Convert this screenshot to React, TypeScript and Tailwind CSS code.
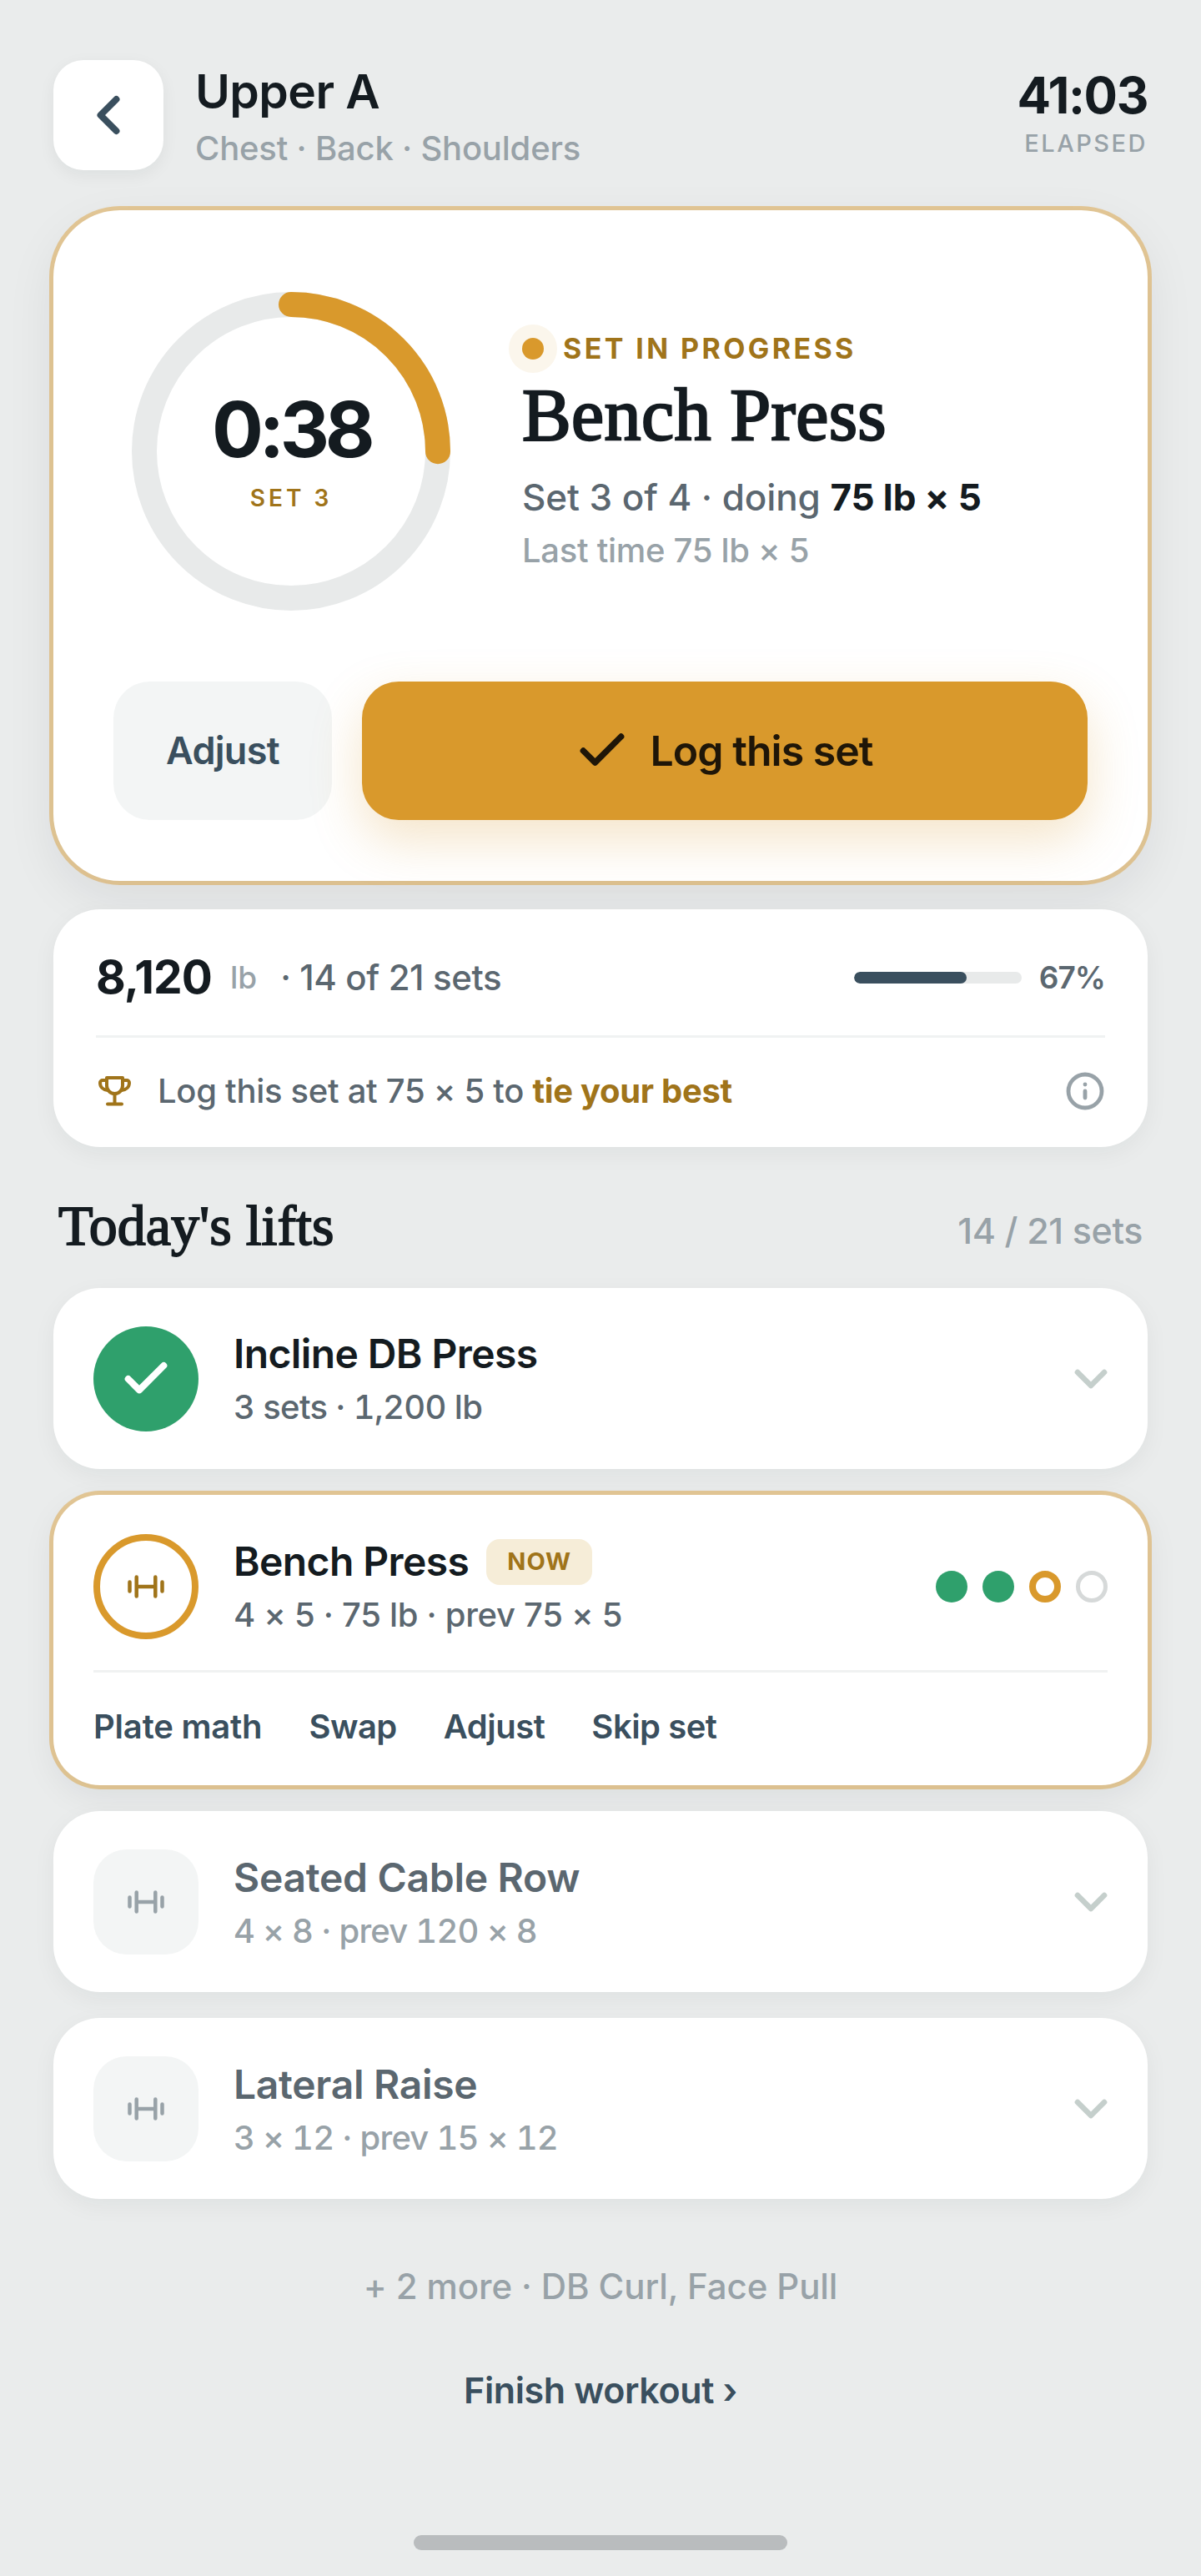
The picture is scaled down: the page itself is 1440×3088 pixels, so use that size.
import { Check, ChevronDown, ChevronLeft, Info } from "lucide-react";

const serif = "font-['Liberation_Serif',serif]";

function Barbell({ className }: { className: string }) {
  return (
    <svg viewBox="0 0 44 28" fill="none" stroke="currentColor" strokeWidth="4.5" strokeLinecap="round" className={className}>
      <path d="M2.5 8.5v11M10.7 2.5v23M33.3 2.5v23M41.5 8.5v11M10.7 14h22.6" />
    </svg>
  );
}

function TrophyIcon({ className }: { className: string }) {
  return (
    <svg viewBox="0 0 39 36" fill="none" stroke="currentColor" strokeWidth="4" strokeLinecap="round" strokeLinejoin="round" className={className}>
      <path d="M10 2h19v9.5a9.5 9.5 0 0 1-19 0z" />
      <path d="M10 5H5a3 3 0 0 0-3 3c0 5 3.5 8.5 9 9M29 5h5a3 3 0 0 1 3 3c0 5-3.5 8.5-9 9" />
      <path d="M19.5 21v12M11 33.5h17" />
    </svg>
  );
}

function LiftRow({ name, meta }: { name: string; meta: string }) {
  return (
    <div className="h-[217px] rounded-[56px] bg-white shadow-[0_8px_28px_rgba(20,30,40,0.05)] px-[48px] flex items-center">
      <div className="w-[126px] h-[126px] rounded-[40px] bg-[#f3f5f5] flex items-center justify-center text-[#98a2a8]">
        <Barbell className="w-[44px] h-[28px]" />
      </div>
      <div className="ml-[42px] flex-1 pt-[2px]">
        <div className="text-[48px] leading-[60px] font-semibold text-[#5b6770] tracking-[-0.3px]">{name}</div>
        <div className="text-[40px] leading-[52px] mt-[8px] font-medium tabular-nums text-[#98a2a8] tracking-[-0.8px]">{meta}</div>
      </div>
      <ChevronDown className="w-[64px] h-[64px] -mr-[12px] text-[#c5cfcc]" strokeWidth={2.5} />
    </div>
  );
}

export default function App() {
  return (
    <div className="h-[3088px] bg-[#eaecec] px-[64px] pt-[72px] font-['Inter',sans-serif] text-[#141b20] relative overflow-hidden">
      <header className="h-[132px] flex items-start">
        <button type="button" className="w-[132px] h-[132px] rounded-[36px] bg-white shadow-[0_6px_20px_rgba(20,30,40,0.06)] flex items-center justify-center text-[#3a4f5e]">
          <ChevronLeft className="w-[76px] h-[76px]" strokeWidth={2.5} />
        </button>
        <div className="ml-[38px] flex-1">
          <div className="text-[57px] leading-[68px] font-semibold tracking-[-0.6px] mt-[4px]">Upper A</div>
          <div className="text-[40px] leading-[52px] mt-[8px] font-medium text-[#98a2a8] tracking-[-0.2px]">Chest · Back · Shoulders</div>
        </div>
        <div className="text-right pt-[10px]">
          <div className="text-[60px] leading-[64px] font-bold tracking-[-1.4px]">41:03</div>
          <div className="text-[29px] leading-[36px] mt-[8px] font-medium tracking-[2.5px] text-[#98a2a8]">ELAPSED</div>
        </div>
      </header>

      <section className="mt-[48px] h-[804px] rounded-[80px] bg-white ring-[5px] ring-[rgba(217,153,44,0.45)] shadow-[0_20px_60px_rgba(20,30,40,0.08)] pt-[98px]">
        <div className="pl-[94px] flex items-center">
          <div className="relative w-[382px] h-[382px] shrink-0">
            <svg viewBox="0 0 382 382" className="w-[382px] h-[382px] -rotate-90" fill="none" strokeWidth="30">
              <circle cx="191" cy="191" r="176" stroke="#e8eaea" />
              <circle cx="191" cy="191" r="176" stroke="#d9992c" strokeLinecap="round" strokeDasharray="276.5 1106" />
            </svg>
            <div className="absolute inset-0 flex flex-col items-center justify-center">
              <div className="text-[92px] leading-[104px] font-bold tracking-[-5.5px] mt-[-4px]">0:38</div>
              <div className="text-[28px] leading-[36px] font-semibold tracking-[4px] text-[#a0741a] mt-[12px]">SET 3</div>
            </div>
          </div>
          <div className="ml-[86px] mt-[2px]">
            <div className="flex items-center gap-[23px]">
              <span className="w-[26px] h-[26px] rounded-full bg-[#d9992c] shadow-[0_0_0_16px_#fbf6ec]" />
              <span className="text-[34px] leading-[40px] font-bold tracking-[3.4px] text-[#a0741a]">SET IN PROGRESS</span>
            </div>
            <h1 className={`${serif} text-[88px] leading-[96px] tracking-[0.4px] [-webkit-text-stroke:2.4px_#141b20] mt-[12px]`}>Bench Press</h1>
            <p className="text-[44px] leading-[56px] font-medium text-[#5b6770] mt-[22px] tracking-[-0.1px]">
              Set 3 of 4 · doing <b className="font-bold text-[#141b20]">75 lb × 5</b>
            </p>
            <p className="text-[40px] leading-[52px] font-medium text-[#98a2a8] mt-[10px] tracking-[-0.3px]">Last time 75 lb × 5</p>
          </div>
        </div>
        <div className="mt-[85px] px-[72px] flex gap-[36px]">
          <button type="button" className="w-[262px] h-[166px] rounded-[44px] bg-[#f3f5f5] text-[45px] font-semibold text-[#3a4f5e] tracking-[-0.7px]">Adjust</button>
          <button type="button" className="flex-1 h-[166px] pr-[4px] rounded-[44px] bg-[#d9992c] text-[#1f1608] shadow-[0_24px_60px_rgba(217,153,44,0.25)] flex items-center justify-center gap-[24px] text-[50px] font-semibold tracking-[-1px]">
            <Check className="w-[68px] h-[68px]" strokeWidth={2.6} />
            Log this set
          </button>
        </div>
      </section>

      <section className="mt-[34px] h-[285px] rounded-[56px] bg-white shadow-[0_8px_28px_rgba(20,30,40,0.05)] px-[51px]">
        <div className="h-[154px] flex items-center border-b-[3px] border-[#f0f2f2] pt-[12px]">
          <span className="text-[55px] font-bold tracking-[-0.9px]">8,120</span>
          <span className="text-[37px] font-medium text-[#98a2a8] ml-[22px]">lb</span>
          <span className="text-[42px] font-medium text-[#5b6770] ml-[28px] tracking-[-0.4px]">· 14 of 21 sets</span>
          <div className="ml-auto w-[201px] h-[14px] rounded-full bg-[#e8eaea] overflow-hidden">
            <div className="w-[67%] h-full rounded-full bg-[#3a4f5e]" />
          </div>
          <span className="ml-[21px] text-[37px] font-semibold text-[#5b6770] tracking-[-1px]">67%</span>
        </div>
        <div className="h-[128px] flex items-center">
          <TrophyIcon className="w-[39px] h-[36px] text-[#a0741a] ml-[3px]" />
          <span className="ml-[32px] text-[40px] font-medium text-[#5b6770] tracking-[-0.3px]">
            Log this set at 75 × 5 to <b className="font-bold text-[#a0741a]">tie your best</b>
          </span>
          <Info className="ml-auto w-[48px] h-[48px] text-[#98a2a8]" strokeWidth={2.4} />
        </div>
      </section>

      <div className="mt-[46px] mb-[27px] h-[96px] px-[6px] flex items-center justify-between">
        <h2 className={`${serif} text-[68px] [-webkit-text-stroke:1.8px_#141b20]`}>Today's lifts</h2>
        <span className="text-[43px] font-medium text-[#98a2a8] tracking-[-0.4px] mt-[12px]">14 / 21 sets</span>
      </div>

      <div className="flex flex-col gap-[31px]">
        <div className="h-[217px] rounded-[56px] bg-white shadow-[0_8px_28px_rgba(20,30,40,0.05)] px-[48px] flex items-center">
          <div className="w-[126px] h-[126px] rounded-full bg-[#2fa06c] flex items-center justify-center text-white">
            <Check className="w-[64px] h-[64px]" strokeWidth={3} />
          </div>
          <div className="ml-[42px] flex-1">
            <div className="text-[48px] leading-[60px] font-semibold tracking-[-0.6px]">Incline DB Press</div>
            <div className="text-[40px] leading-[52px] mt-[8px] font-medium tabular-nums text-[#5b6770] tracking-[-0.7px]">3 sets · 1,200 lb</div>
          </div>
          <ChevronDown className="w-[64px] h-[64px] -mr-[12px] text-[#c5cfcc]" strokeWidth={2.5} />
        </div>

        <div className="h-[348px] rounded-[56px] bg-white ring-[5px] ring-[rgba(217,153,44,0.45)] shadow-[0_12px_40px_rgba(20,30,40,0.07)] px-[48px]">
          <div className="h-[213px] pt-[10px] flex items-center border-b-[3px] border-[#f0f2f2]">
            <div className="w-[126px] h-[126px] rounded-full border-[8px] border-[#d9992c] flex items-center justify-center text-[#a0741a]">
              <Barbell className="w-[44px] h-[28px]" />
            </div>
            <div className="ml-[42px] flex-1">
              <div className="flex items-center">
                <span className="text-[48px] leading-[60px] font-semibold tracking-[-0.6px]">Bench Press</span>
                <span className="ml-[21px] h-[55px] px-[25px] rounded-[16px] bg-[#f6edd8] text-[#a0741a] text-[29px] font-bold tracking-[1px] flex items-center">NOW</span>
              </div>
              <div className="text-[40px] leading-[52px] mt-[8px] font-medium text-[#5b6770] tracking-[-0.3px]">4 × 5 · 75 lb · prev 75 × 5</div>
            </div>
            <div className="flex gap-[18px]">
              <span className="w-[38px] h-[38px] rounded-full bg-[#2fa06c]" />
              <span className="w-[38px] h-[38px] rounded-full bg-[#2fa06c]" />
              <span className="w-[38px] h-[38px] rounded-full border-[8px] border-[#d9992c]" />
              <span className="w-[38px] h-[38px] rounded-full border-[5px] border-[#d6d9d9]" />
            </div>
          </div>
          <div className="h-[135px] pb-[6px] flex items-center gap-[56px] text-[40px] font-semibold text-[#3a4f5e] tracking-[-0.5px]">
            <span className="tracking-[-0.2px]">Plate math</span>
            <span>Swap</span>
            <span>Adjust</span>
            <span>Skip set</span>
          </div>
        </div>

        <LiftRow name="Seated Cable Row" meta="4 × 8 · prev 120 × 8" />
        <LiftRow name="Lateral Raise" meta="3 × 12 · prev 15 × 12" />
      </div>

      <div className="mt-[80px] text-center text-[42px] leading-[50px] font-medium text-[#98a2a8] tracking-[-0.1px]">+ 2 more · DB Curl, Face Pull</div>
      <div className="mt-[72px] text-center text-[43px] leading-[54px] font-semibold text-[#3a4f5e] tracking-[-0.4px]">Finish workout ›</div>

      <div className="absolute left-[496px] bottom-[31px] w-[448px] h-[18px] rounded-full bg-[#b9bcbe]" />
    </div>
  );
}
